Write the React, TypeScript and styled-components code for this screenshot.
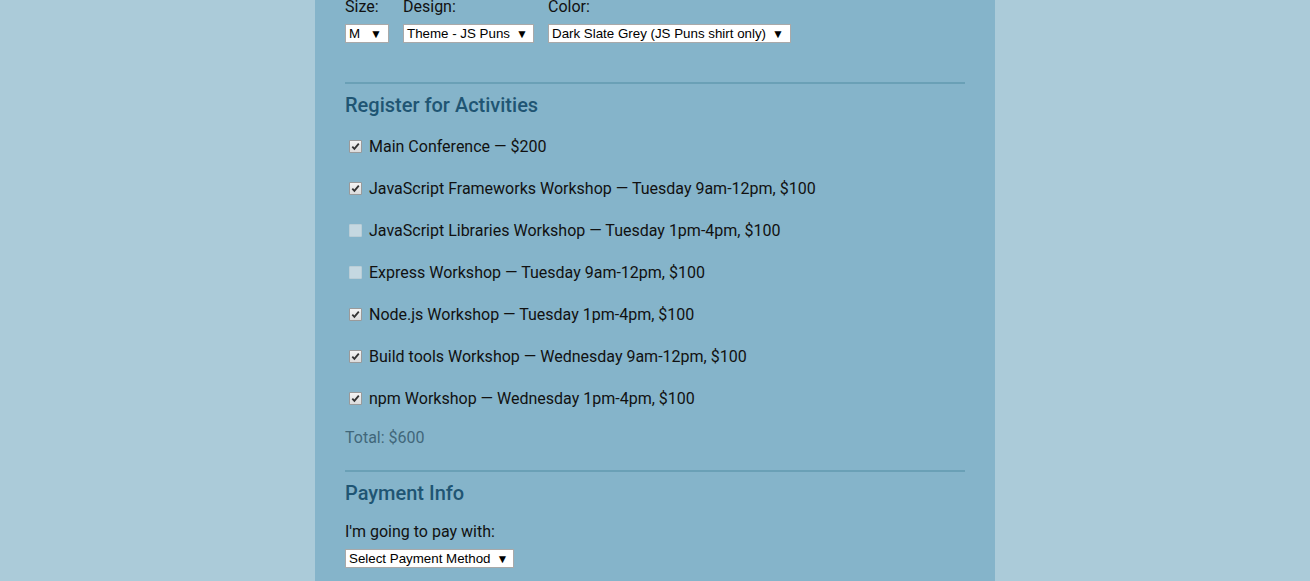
import React from "react";
import styled, { createGlobalStyle } from "styled-components";

const Global = createGlobalStyle`
  html, body { margin: 0; padding: 0; background: #abcbd9; }
  body { font-family: Roboto, "Liberation Sans", sans-serif; overflow: hidden; }
`;

const Page = styled.div`
  width: 680px;
  min-height: 581px;
  margin: 0 auto;
  background: #85b4ca;
  padding: 0 30px;
  box-sizing: border-box;
  display: flex;
  flex-direction: column;
`;

const ShirtRow = styled.div`
  display: flex;
  gap: 14px;
  margin-top: -2px;
`;

const Field = styled.div`
  display: flex;
  flex-direction: column;
`;

const Label = styled.label<{ $gap?: number }>`
  font-size: 16px;
  line-height: 18px;
  color: #111;
  margin-top: ${(p) => p.$gap ?? 0}px;
`;

const SelectBox = styled.div<{ $w: number }>`
  width: ${(p) => p.$w}px;
  height: 19px;
  box-sizing: border-box;
  margin-top: 8px;
  background: #fff;
  border: 1px solid #a9a9a9;
  display: flex;
  align-items: center;
  justify-content: space-between;
  padding: 0 6px 0 3px;
  font-family: "Liberation Sans", Arial, sans-serif;
  font-size: 13.33px;
  color: #000;
  white-space: nowrap;
`;

const Arrow = styled.span`
  font-size: 12px;
  line-height: 1;
  margin-left: 6px;
`;

const Divider = styled.hr<{ $top: number }>`
  border: none;
  height: 2px;
  background: #6aa0b6;
  margin: ${(p) => p.$top}px 0 0;
  width: 100%;
`;

const Heading = styled.h3`
  font-size: 20px;
  line-height: 22px;
  font-weight: 500;
  color: #1f5573;
  margin: 9.5px 0 0;
`;

const ActivityList = styled.div`
  display: flex;
  flex-direction: column;
  gap: 24px;
  margin-top: 22px;
`;

const Activity = styled.label`
  display: flex;
  align-items: flex-start;
  font-size: 16px;
  line-height: 18px;
  color: #111;
`;

const Check = styled.span<{ $on: boolean }>`
  width: 13px;
  height: 13px;
  box-sizing: border-box;
  margin: 2px 7px 0 4px;
  border-radius: 1px;
  border: 1px solid ${(p) => (p.$on ? "#9a9a9a" : "#b9cdd6")};
  background: ${(p) =>
    p.$on ? "linear-gradient(#f4f4f4, #dcdcdc)" : "#c5d8e1"};
  display: flex;
  align-items: center;
  justify-content: center;
  flex-shrink: 0;
`;

const Total = styled.p`
  margin: 21px 0 0;
  font-size: 16px;
  line-height: 18px;
  color: #41677a;
`;

const activities: [string, boolean][] = [
  ["Main Conference — $200", true],
  ["JavaScript Frameworks Workshop — Tuesday 9am-12pm, $100", true],
  ["JavaScript Libraries Workshop — Tuesday 1pm-4pm, $100", false],
  ["Express Workshop — Tuesday 9am-12pm, $100", false],
  ["Node.js Workshop — Tuesday 1pm-4pm, $100", true],
  ["Build tools Workshop — Wednesday 9am-12pm, $100", true],
  ["npm Workshop — Wednesday 1pm-4pm, $100", true],
];

const Tick = () => (
  <svg width="9" height="9" viewBox="0 0 9 9">
    <path d="M1.3 4.6 L3.4 6.8 L7.8 1.6" fill="none" stroke="#333" strokeWidth="1.8" />
  </svg>
);

export default function App() {
  return (
    <>
      <Global />
      <Page>
        <ShirtRow>
          <Field>
            <Label>Size:</Label>
            <SelectBox $w={44}>
              <span>M</span>
              <Arrow>▼</Arrow>
            </SelectBox>
          </Field>
          <Field>
            <Label>Design:</Label>
            <SelectBox $w={131}>
              <span>Theme - JS Puns</span>
              <Arrow>▼</Arrow>
            </SelectBox>
          </Field>
          <Field>
            <Label>Color:</Label>
            <SelectBox $w={243}>
              <span>Dark Slate Grey (JS Puns shirt only)</span>
              <Arrow>▼</Arrow>
            </SelectBox>
          </Field>
        </ShirtRow>
        <Divider $top={39} />
        <Heading>Register for Activities</Heading>
        <ActivityList>
          {activities.map(([text, on]) => (
            <Activity key={text}>
              <Check $on={on}>{on && <Tick />}</Check>
              {text}
            </Activity>
          ))}
        </ActivityList>
        <Total>Total: $600</Total>
        <Divider $top={23.5} />
        <Heading>Payment Info</Heading>
        <Field>
          <Label $gap={19.6}>I'm going to pay with:</Label>
          <SelectBox $w={169}>
            <span>Select Payment Method</span>
            <Arrow>▼</Arrow>
          </SelectBox>
        </Field>
      </Page>
    </>
  );
}
